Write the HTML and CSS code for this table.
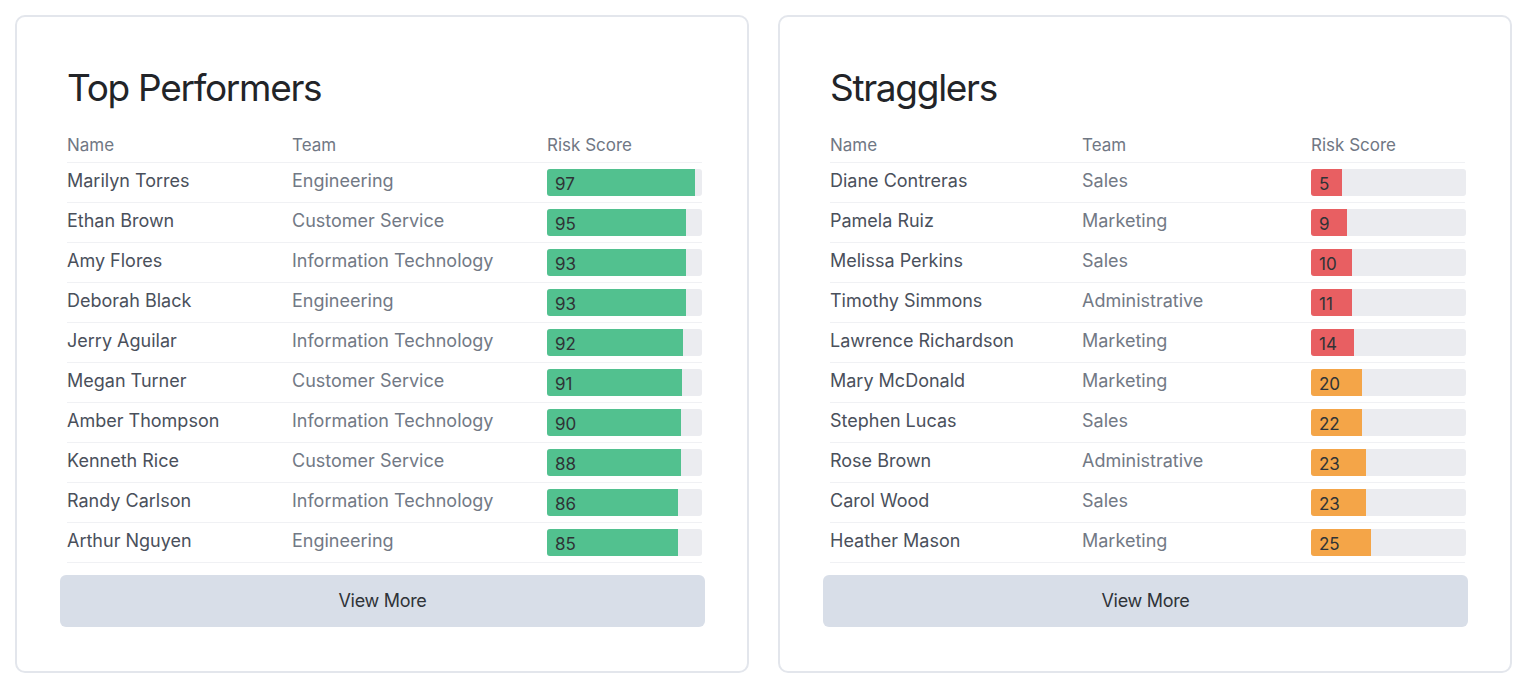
FILE: index.html
```html
<!DOCTYPE html>
<html lang="en">
<head>
<meta charset="utf-8">
<title>Leaderboard</title>
<link rel="stylesheet" href="styles.css">
</head>
<body>
<main class="board">
  <section class="card">
    <h2 class="card-title">Top Performers</h2>
    <table class="list list-top">
      <colgroup><col class="c-name"><col class="c-team"><col class="c-score"></colgroup>
      <thead><tr><th>Name</th><th>Team</th><th>Risk Score</th></tr></thead>
      <tbody>
        <tr><td class="name">Marilyn Torres</td><td class="team">Engineering</td><td><div class="bar"><div class="fill good" style="width:95.5%">97</div></div></td></tr>
        <tr><td class="name">Ethan Brown</td><td class="team">Customer Service</td><td><div class="bar"><div class="fill good" style="width:89.7%">95</div></div></td></tr>
        <tr><td class="name">Amy Flores</td><td class="team">Information Technology</td><td><div class="bar"><div class="fill good" style="width:89.7%">93</div></div></td></tr>
        <tr><td class="name">Deborah Black</td><td class="team">Engineering</td><td><div class="bar"><div class="fill good" style="width:89.7%">93</div></div></td></tr>
        <tr><td class="name">Jerry Aguilar</td><td class="team">Information Technology</td><td><div class="bar"><div class="fill good" style="width:87.7%">92</div></div></td></tr>
        <tr><td class="name">Megan Turner</td><td class="team">Customer Service</td><td><div class="bar"><div class="fill good" style="width:87.1%">91</div></div></td></tr>
        <tr><td class="name">Amber Thompson</td><td class="team">Information Technology</td><td><div class="bar"><div class="fill good" style="width:86.5%">90</div></div></td></tr>
        <tr><td class="name">Kenneth Rice</td><td class="team">Customer Service</td><td><div class="bar"><div class="fill good" style="width:86.5%">88</div></div></td></tr>
        <tr><td class="name">Randy Carlson</td><td class="team">Information Technology</td><td><div class="bar"><div class="fill good" style="width:84.5%">86</div></div></td></tr>
        <tr><td class="name">Arthur Nguyen</td><td class="team">Engineering</td><td><div class="bar"><div class="fill good" style="width:84.5%">85</div></div></td></tr>
      </tbody>
    </table>
    <button class="more" type="button">View More</button>
  </section>
  <section class="card">
    <h2 class="card-title">Stragglers</h2>
    <table class="list list-low">
      <colgroup><col class="c-name"><col class="c-team"><col class="c-score"></colgroup>
      <thead><tr><th>Name</th><th>Team</th><th>Risk Score</th></tr></thead>
      <tbody>
        <tr><td class="name">Diane Contreras</td><td class="team">Sales</td><td><div class="bar"><div class="fill bad" style="width:20%">5</div></div></td></tr>
        <tr><td class="name">Pamela Ruiz</td><td class="team">Marketing</td><td><div class="bar"><div class="fill bad" style="width:23.2%">9</div></div></td></tr>
        <tr><td class="name">Melissa Perkins</td><td class="team">Sales</td><td><div class="bar"><div class="fill bad" style="width:26.5%">10</div></div></td></tr>
        <tr><td class="name">Timothy Simmons</td><td class="team">Administrative</td><td><div class="bar"><div class="fill bad" style="width:26.5%">11</div></div></td></tr>
        <tr><td class="name">Lawrence Richardson</td><td class="team">Marketing</td><td><div class="bar"><div class="fill bad" style="width:27.7%">14</div></div></td></tr>
        <tr><td class="name">Mary McDonald</td><td class="team">Marketing</td><td><div class="bar"><div class="fill warn" style="width:32.9%">20</div></div></td></tr>
        <tr><td class="name">Stephen Lucas</td><td class="team">Sales</td><td><div class="bar"><div class="fill warn" style="width:32.9%">22</div></div></td></tr>
        <tr><td class="name">Rose Brown</td><td class="team">Administrative</td><td><div class="bar"><div class="fill warn" style="width:35.5%">23</div></div></td></tr>
        <tr><td class="name">Carol Wood</td><td class="team">Sales</td><td><div class="bar"><div class="fill warn" style="width:35.5%">23</div></div></td></tr>
        <tr><td class="name">Heather Mason</td><td class="team">Marketing</td><td><div class="bar"><div class="fill warn" style="width:38.7%">25</div></div></td></tr>
      </tbody>
    </table>
    <button class="more" type="button">View More</button>
  </section>
</main>
</body>
</html>
```

FILE: styles.css
```css
* { box-sizing: border-box; }

html, body {
  margin: 0;
  background: #ffffff;
}

body {
  padding: 15px 18px 0 15px;
  font-family: Inter, "Liberation Sans", Arial, sans-serif;
  color: #333;
}

.board {
  display: flex;
  gap: 29px;
}

.card {
  flex: 1 1 0;
  height: 658px;
  border: 2px solid #e3e6ec;
  border-radius: 10px;
  padding: 51px 42px 0 43px;
  display: flex;
  flex-direction: column;
}

.card-title {
  margin: 0 0 2px 7px;
  font-size: 37px;
  line-height: 40px;
  font-weight: 400;
  color: #222428;
  letter-spacing: -1.3px;
}

.list {
  margin: 14px 3px 0 7px;
  border-collapse: collapse;
  table-layout: fixed;
  width: calc(100% - 10px);
}

.list-top .c-name { width: 225px; }
.list-top .c-team { width: 255px; }
.list-low .c-name { width: 252px; }
.list-low .c-team { width: 229px; }

.list th {
  text-align: left;
  font-weight: 400;
  font-size: 17px;
  color: #707784;
  height: 38px;
  padding: 4px 0 0;
  vertical-align: middle;
}

.list td {
  border-top: 1px solid #f0f1f4;
  height: 40px;
  padding: 0;
  font-size: 18px;
  vertical-align: middle;
  white-space: nowrap;
}

.list tbody tr:last-child td { border-bottom: 1px solid #f0f1f4; }

.list td.name { color: #4a505b; padding-bottom: 3px; }
.list td.team { color: #727985; padding-bottom: 3px; }

.bar {
  width: 155px;
  height: 27px;
  background: #ebecf0;
  border-radius: 3px;
  overflow: hidden;
  display: flex;
}

.fill {
  height: 100%;
  padding: 3px 0 0 8px;
  font-size: 17px;
  line-height: 24px;
  color: #2f3336;
}

.good { background: #52c18f; }
.bad { background: #e85f62; }
.warn { background: #f4a548; }

.more {
  margin-top: 12px;
  height: 52px;
  width: 100%;
  border: none;
  border-radius: 6px;
  background: #d8dee8;
  font-family: Inter, "Liberation Sans", Arial, sans-serif;
  font-size: 18px;
  color: #2f3338;
  letter-spacing: -0.3px;
  cursor: pointer;
}
```
